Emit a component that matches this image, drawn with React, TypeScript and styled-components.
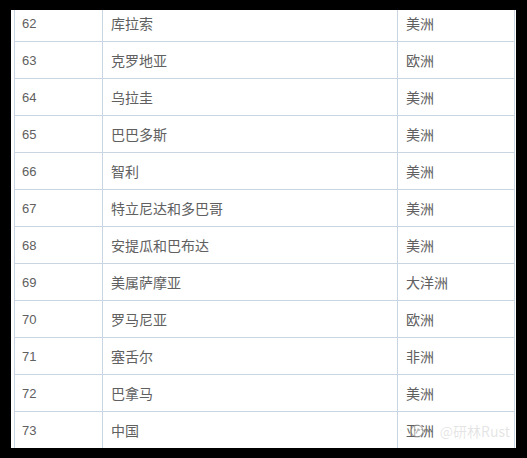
import React from "react";
import styled, { createGlobalStyle } from "styled-components";

const Global = createGlobalStyle`
  html, body { margin: 0; padding: 0; background: #000; }
  body { width: 527px; height: 458px; overflow: hidden; }
`;

const Frame = styled.div`
  box-sizing: border-box;
  width: 527px;
  height: 458px;
  padding: 10px 11px 10px 11px;
  background: #000;
`;

const Sheet = styled.div`
  box-sizing: border-box;
  height: 438px;
  background: #fff;
  overflow: hidden;
  padding: 0 1px 0 3px;
  position: relative;
`;

const Table = styled.div`
  margin-top: -6px;
  display: flex;
  flex-direction: column;
`;

const Row = styled.div`
  display: grid;
  grid-template-columns: 88px 295px 118px;
  height: 37px;
  box-sizing: border-box;
  border-top: 1px solid #c9d5e1;
`;

const Cell = styled.div<{ $num?: boolean; $last?: boolean }>`
  box-sizing: border-box;
  display: flex;
  align-items: center;
  padding-left: ${(p) => (p.$num ? "7px" : "8px")};
  border-left: 1px solid #c9d5e1;
  border-right: ${(p) => (p.$last ? "1px solid #c9d5e1" : "none")};
  color: #606060;
  font-family: ${(p) =>
    p.$num
      ? '"Liberation Sans", "DejaVu Sans", sans-serif'
      : '"Noto Sans CJK SC", sans-serif'};
  font-size: ${(p) => (p.$num ? "13px" : "14px")};
  white-space: nowrap;
`;

const Watermark = styled.div`
  position: absolute;
  right: 6px;
  bottom: 7px;
  display: flex;
  align-items: center;
  gap: 16px;
  font-family: "Noto Sans CJK SC", sans-serif;
  font-size: 14px;
  color: rgba(150, 150, 150, 0.26);
  pointer-events: none;
`;

const rows: [string, string, string][] = [
  ["62", "库拉索", "美洲"],
  ["63", "克罗地亚", "欧洲"],
  ["64", "乌拉圭", "美洲"],
  ["65", "巴巴多斯", "美洲"],
  ["66", "智利", "美洲"],
  ["67", "特立尼达和多巴哥", "美洲"],
  ["68", "安提瓜和巴布达", "美洲"],
  ["69", "美属萨摩亚", "大洋洲"],
  ["70", "罗马尼亚", "欧洲"],
  ["71", "塞舌尔", "非洲"],
  ["72", "巴拿马", "美洲"],
  ["73", "中国", "亚洲"],
];

export default function App() {
  return (
    <>
      <Global />
      <Frame>
        <Sheet>
          <Table>
            {rows.map(([n, name, region]) => (
              <Row key={n}>
                <Cell $num>{n}</Cell>
                <Cell>{name}</Cell>
                <Cell $last>{region}</Cell>
              </Row>
            ))}
          </Table>
          <Watermark>
            <svg width="14" height="14" viewBox="0 0 14 14">
              <circle cx="7" cy="7" r="6" fill="rgba(255,255,255,0.5)" stroke="rgba(110,110,110,0.5)" strokeWidth="1.2" />
              <circle cx="5" cy="6" r="1" fill="rgba(110,110,110,0.5)" />
              <circle cx="9" cy="6" r="1" fill="rgba(110,110,110,0.5)" />
            </svg>
            <span>@研林Rust</span>
          </Watermark>
        </Sheet>
      </Frame>
    </>
  );
}
